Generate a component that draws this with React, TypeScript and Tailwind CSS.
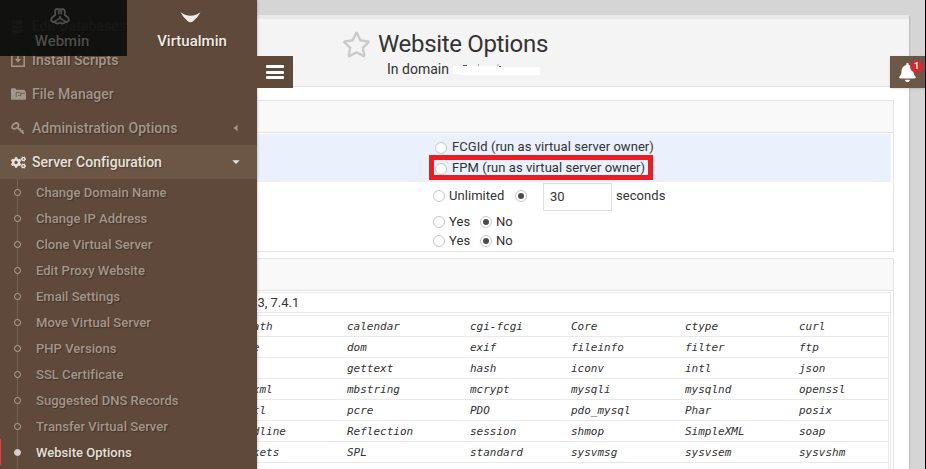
import React from "react";
import { FaRegStar, FaBell, FaCogs, FaDatabase } from "react-icons/fa";

const subItems = [
  "Change Domain Name",
  "Change IP Address",
  "Clone Virtual Server",
  "Edit Proxy Website",
  "Email Settings",
  "Move Virtual Server",
  "PHP Versions",
  "SSL Certificate",
  "Suggested DNS Records",
  "Transfer Virtual Server",
  "Website Options",
];

const modules = [
  ["bcmath", "calendar", "cgi-fcgi", "Core", "ctype", "curl"],
  ["date", "dom", "exif", "fileinfo", "filter", "ftp"],
  ["gd", "gettext", "hash", "iconv", "intl", "json"],
  ["libxml", "mbstring", "mcrypt", "mysqli", "mysqlnd", "openssl"],
  ["pcntl", "pcre", "PDO", "pdo_mysql", "Phar", "posix"],
  ["readline", "Reflection", "session", "shmop", "SimpleXML", "soap"],
  ["sockets", "SPL", "standard", "sysvmsg", "sysvsem", "sysvshm"],
  ["tokenizer", "wddx", "xml", "xmlreader", "xmlwriter", "xsl"],
];

function InstallIcon() {
  return (
    <svg width="14" height="14" viewBox="0 0 14 14" fill="none" stroke="currentColor" strokeWidth="1.5">
      <path d="M4.2 2H.8v11.2h12.4V2H9.8" />
      <path d="M7 1v6" />
      <path d="M4 6h6L7 9.5z" fill="currentColor" stroke="none" />
    </svg>
  );
}

function FolderIcon() {
  return (
    <svg width="15" height="12" viewBox="0 0 15 12" fill="currentColor">
      <path d="M0 1.200Q0 .2 1 .2h3.400l1.100 1.600h7.600q.8 0 .8.9V3.600H15v7.200q0 1-1 1H1q-1 0-1-1z" />
      <path d="M5.200 9V4.300h3.300l.8 1H14M7.200 7.400h2.600V5.400" fill="none" stroke="#5e493a" strokeWidth=".7" />
    </svg>
  );
}

function KeyIcon() {
  return (
    <svg width="14" height="13" viewBox="0 0 14 13" fill="none" stroke="currentColor">
      <ellipse cx="4.300" cy="4" rx="3.500" ry="2.500" transform="rotate(-40 4.300 4)" strokeWidth="1.800" />
      <path d="M6.300 5.300L12.800 11.600" strokeWidth="1.800" />
      <path d="M12.300 8.200L10.300 10M10 6.600L8.500 8" strokeWidth="1.500" />
    </svg>
  );
}

function WebminLogo() {
  return (
    <svg width="20" height="17" viewBox="0 0 20 17" fill="none" stroke="currentColor" strokeWidth="1.8" strokeLinejoin="round" strokeLinecap="round">
      <path d="M5.200 7V3Q5.200 1 7.200 1T8.800 3V5.500M11.200 5.500V3Q11.200 1 12.800 1T14.800 3V7M8.800 1.800Q10 .8 11.200 1.800" />
      <path d="M5.200 7L2.400 9.200Q.4 11 1.600 12.800T4.800 13.600L6.600 12.400M14.800 7L17.600 9.200Q19.600 11 18.400 12.800T15.200 13.600L13.400 12.400" />
      <path d="M4.800 13.600Q6 16 8 15.600L10 14.400 12 15.600Q14 16 15.200 13.600" />
      <path d="M10 8.600V10L7.800 11.400M10 10L12.200 11.400" />
    </svg>
  );
}

function Radio({ on = false }: { on?: boolean }) {
  return (
    <span className="flex size-3 shrink-0 items-center justify-center rounded-full border border-[#c6c6c6] bg-white">
      {on && <span className="size-1.5 rounded-full bg-[#4c4c4c]" />}
    </span>
  );
}

function MenuRow({ icon, label, active = false, caret }: { icon: React.ReactNode; label: string; active?: boolean; caret?: React.ReactNode }) {
  return (
    <div className={`flex h-[34px] shrink-0 items-center pl-[11px] pr-[17px] text-[14px] font-medium tracking-[0.04px] ${active ? "bg-[#6c5746] text-[#e6e1dc]" : "text-[#a3968a]"}`}>
      <span className="flex w-[21px] shrink-0 items-center">{icon}</span>
      <span className="flex-1 whitespace-nowrap pt-px">{label}</span>
      {caret}
    </div>
  );
}

function YesNo() {
  return (
    <div className="flex h-[19px] items-center">
      <Radio />
      <span className="ml-1 w-[31px]">Yes</span>
      <Radio on />
      <span className="ml-1">No</span>
    </div>
  );
}

export default function App() {
  return (
    <div className="relative flex h-[469px] w-[926px] overflow-hidden border-r border-black bg-[#d5d5d5] font-['Roboto',sans-serif] text-[13px] text-[#333]">
      <aside className="relative z-10 flex w-[257px] shrink-0 flex-col bg-[#5e493a] pt-[9px] shadow-[0_0_3px_rgba(0,0,0,0.3)] [text-shadow:1px_1px_1px_rgba(0,0,0,0.3)]">
        <MenuRow icon={<FaDatabase size={13} />} label="Edit Databases" />
        <MenuRow icon={<InstallIcon />} label="Install Scripts" />
        <MenuRow icon={<FolderIcon />} label="File Manager" />
        <MenuRow
          icon={<KeyIcon />}
          label="Administration Options"
          caret={<svg width="8" height="8" viewBox="0 0 8 8" fill="currentColor"><path d="M5.500 .8v6.400L1.500 4z" /></svg>}
        />
        <MenuRow
          active
          icon={<FaCogs size={15} />}
          label="Server Configuration"
          caret={<svg width="8" height="8" viewBox="0 0 8 8" fill="currentColor"><path d="M.3 2.300h7.400L4 6z" /></svg>}
        />
        <div className="bg-[linear-gradient(#75614f,#75614f)] bg-[length:1px_100%] bg-[position:17px_0] bg-no-repeat">
          {subItems.map((label) => {
            const current = label === "Website Options";
            return (
              <div key={label} className={`flex h-[26px] items-center border-l pl-[13px] text-[13px] font-medium tracking-[0.03px] ${current ? "border-[#f23b35] text-[#e6e1dc]" : "border-transparent text-[#a3968a]"}`}>
                <span className={`mt-px size-[7px] shrink-0 rounded-full border ${current ? "border-[#d6d0ca] bg-[#d6d0ca]" : "border-[#b5a99f] bg-[#5e493a]"}`} />
                <span className="ml-[15px] whitespace-nowrap pt-[2px]">{label}</span>
              </div>
            );
          })}
          <div className="h-1" />
        </div>
        <div className="absolute left-0 top-0 flex h-14 w-full text-[15px] font-medium">
          <div className="flex w-[127px] flex-col items-center bg-[#0c0d0c]/93 pr-[3px] pt-2 text-[#4f4e4c]">
            <span className="-ml-[5px] flex"><WebminLogo /></span>
            <span className="mt-[5px] leading-[22px]">Webmin</span>
          </div>
          <div className="flex flex-1 flex-col items-center bg-[#5e493a] pt-3 text-[#eeebe8]">
            <svg className="-ml-[3px]" width="21" height="11" viewBox="0 0 22 11" fill="currentColor"><path d="M.5 0Q6 3.700 11 3.700T21.500 0Q18.500 6 13.500 9.600 11 11.200 8.500 9.600 3.500 6 .5 0z" /></svg>
            <span className="mt-[7px] leading-[22px]">Virtualmin</span>
          </div>
        </div>
      </aside>

      <main className="mt-[15px] w-[652px] overflow-hidden bg-white shadow-[1px_1px_1px_rgba(0,0,0,0.1)]">
        <header className="h-[72px] border-b border-t-4 border-b-[#e0e0e0] border-t-[#e8e8e8] bg-[#f4f4f4] pl-[85px] pt-[10px]">
          <div className="flex h-[30px] items-center">
            <FaRegStar size={29} color="#cbcbcb" className="shrink-0" />
            <h1 className="ml-[7px] text-[24px] leading-[30px] tracking-[-0.33px]">Website Options</h1>
          </div>
          <div className="ml-[45px] flex h-5 items-center text-[14px]">
            <span>In domain</span>
            <svg className="ml-1" width="88" height="12" viewBox="0 0 88 12">
              <path d="M0 3h44l5 1h38v8H59l-2 1H7v-2H0z" fill="#fff" />
              <path d="M10 2.500h4M25 2h1M44.500 2h1M46 3.500h2" stroke="#555" />
            </svg>
          </div>
        </header>

        <section className="mt-[13px] h-[152px] w-[637px] border-b border-r border-t border-[#e4e4e4] tracking-[0.05px]">
          <div className="h-8 border-b border-[#e4e4e4] bg-[#f9f9f9]" />
          <div className="mt-px h-12 w-[634px] bg-[#eaf1fc] pl-[178px] pt-[2px]">
            <div className="flex h-[21px] items-center">
              <span className="mt-[3px] flex"><Radio /></span>
              <span className="ml-[5px]">FCGId (run as virtual server owner)</span>
            </div>
            <div className="relative flex h-[21px] items-center">
              <span className="mt-[3px] flex"><Radio /></span>
              <span className="ml-[5px]">FPM (run as virtual server owner)</span>
              <span className="absolute -left-[6px] -top-[2px] h-[25px] w-[224px] border-[5px] border-[#ec1c24]" />
            </div>
          </div>
          <div className="pl-[176px] pt-px">
            <div className="flex h-7 items-center">
              <span className="-mt-[2px] flex items-center">
                <Radio />
                <span className="ml-1 w-[66px]">Unlimited</span>
                <Radio on />
              </span>
              <span className="ml-4 flex h-7 w-[69px] items-center border border-[#dedede] bg-white pl-[6px]">30</span>
              <span className="-mt-[2px] ml-1">seconds</span>
            </div>
            <div className="mt-px">
              <YesNo />
              <YesNo />
            </div>
          </div>
        </section>

        <section className="mt-[6px] w-[637px] border-r border-t border-[#e4e4e4]">
          <div className="h-8 border-b border-[#e4e4e4] bg-[#f9f9f9]" />
          <div className="mt-px h-[200px] w-[634px] border-r border-t border-[#e9e9e9]">
            <div className="flex h-5 items-center border-b border-[#e9e9e9]">
              <span className="-ml-[21px]">7.3.3, 7.4.1</span>
            </div>
            <div className="mt-[2px] w-[632px] border-r border-t border-[#e9e9e9] font-['DejaVu_Sans_Mono',monospace] text-[11px] italic">
              {modules.map((row) => (
                <div key={row[0]} className="-ml-[24px] grid h-[21px] grid-cols-[114px_123px_101px_114px_114px_89px] items-center border-b border-[#e9e9e9] pt-[2px]">
                  {row.map((name) => (
                    <span key={name}>{name}</span>
                  ))}
                </div>
              ))}
            </div>
          </div>
        </section>
      </main>

      <button className="absolute left-[257px] top-14 z-20 flex h-8 w-9 flex-col items-center justify-center gap-[2.500px] bg-[#5e493a]">
        <span className="h-[3px] w-[18px] rounded-[1px] bg-white" />
        <span className="h-[3px] w-[18px] rounded-[1px] bg-white" />
        <span className="h-[3px] w-[18px] rounded-[1px] bg-white" />
      </button>
      <button className="absolute right-0 top-14 z-20 flex h-8 w-[35px] items-center justify-center bg-[#6b5849] pt-px text-white shadow-sm">
        <FaBell size={19} />
        <span className="absolute right-[2px] top-1 flex size-[13px] items-center justify-center rounded-full bg-[#d9282b] text-[9px] font-bold">1</span>
      </button>
    </div>
  );
}
